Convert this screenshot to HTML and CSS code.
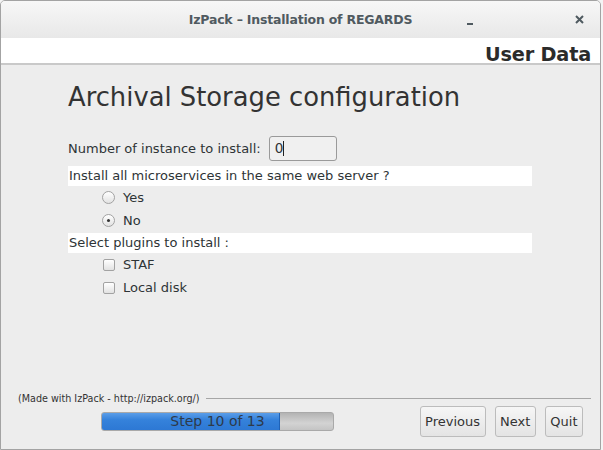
FILE: index.html
```html
<!DOCTYPE html>
<html>
<head>
<meta charset="utf-8">
<link rel="stylesheet" href="styles.css">
</head>
<body>
<div class="window">
  <div class="titlebar">
    <span class="title">IzPack – Installation of REGARDS</span>
    <span class="tb-min"></span>
    <svg class="tb-close" width="9" height="9" viewBox="0 0 9 9"><path d="M1 1L8 8M8 1L1 8" stroke="#4f5a60" stroke-width="2"/></svg>
  </div>
  <div class="header"><span class="header-title">User Data</span></div>
  <div class="panel">
    <div class="form">
      <h1 class="heading">Archival Storage configuration</h1>
      <div class="field-row">
        <span class="label">Number of instance to install:</span>
        <span class="input">0<span class="caret"></span></span>
      </div>
      <div class="band band-first">Install all microservices in the same web server ?</div>
      <div class="opt"><span class="radio"></span><span>Yes</span></div>
      <div class="opt"><span class="radio checked"></span><span>No</span></div>
      <div class="band">Select plugins to install :</div>
      <div class="opt"><span class="check"></span><span>STAF</span></div>
      <div class="opt"><span class="check"></span><span>Local disk</span></div>
    </div>
    <div class="footer">
      <div class="madewith"><span class="madewith-text">(Made with IzPack - http://izpack.org/)</span><span class="rule"></span></div>
      <div class="nav">
        <div class="progress"><div class="progress-fill" style="width:77%"></div><span class="progress-text">Step 10 of 13</span></div>
        <div class="buttons">
          <button class="btn">Previous</button>
          <button class="btn">Next</button>
          <button class="btn">Quit</button>
        </div>
      </div>
    </div>
  </div>
</div>
</body>
</html>
```
FILE: styles.css
```css
html, body { margin: 0; padding: 0; }
body {
  width: 603px; height: 450px; overflow: hidden;
  background: #f4f4f4;
  font-family: "DejaVu Sans", sans-serif;
  color: #2e3436;
}
.window {
  box-sizing: border-box;
  width: 601px; height: 450px;
  border: 1px solid #a3a3a3;
  border-radius: 5px 5px 0 0;
  display: flex; flex-direction: column;
  background: #ededed;
  overflow: hidden;
}
.titlebar {
  position: relative;
  height: 37px; flex: none;
  background: linear-gradient(#f7f7f7, #e8e8e8);
  display: flex; align-items: center; justify-content: center;
}
.title {
  font-family: "DejaVu Sans", sans-serif;
  font-weight: bold; font-size: 12.5px; color: #505a60;
  letter-spacing: -0.2px;
}
.tb-min {
  position: absolute; left: 466px; top: 22px;
  width: 6px; height: 2px; background: #4f5a60;
}
.tb-close { position: absolute; left: 574px; top: 14px; }
.header {
  height: 25px; flex: none;
  background: #fff;
  border-bottom: 2px solid #c9c9c9;
  display: flex; justify-content: flex-end; align-items: flex-end;
  padding-right: 9px;
}
.header-title {
  font-weight: bold; font-size: 19.3px; color: #2b2b2b;
  line-height: 23px; letter-spacing: -0.2px;
  margin-bottom: -3px;
}
.panel { flex: 1; display: flex; flex-direction: column; }
.form { padding-left: 67px; width: 464px; flex: 1; }
.heading {
  margin: 17px 0 0 0;
  font-size: 25.8px; font-weight: normal; line-height: 30px;
  color: #333; letter-spacing: 0;
}
.field-row {
  margin-top: 24px;
  display: flex; align-items: center; height: 25px;
  font-size: 13px;
}
.label { margin-right: 8px; }
.input {
  box-sizing: border-box;
  width: 68px; height: 25px;
  border: 1px solid #9a9a9a; border-radius: 3px;
  background: #f0f0f0;
  padding-left: 5px; font-size: 13.5px; line-height: 23px;
  display: flex; align-items: center;
}
.caret { width: 1px; height: 15px; background: #222; margin-left: 0; }
.band {
  margin-top: 1px;
  background: #fff; height: 20px; line-height: 20px;
  font-size: 13px; padding-left: 1px;
}
.band-first { margin-top: 5px; }
.opt {
  height: 23px; display: flex; align-items: center;
  padding-left: 34px; font-size: 13px;
}
.opt span:last-child { margin-left: 8px; }
.radio {
  box-sizing: border-box;
  width: 13px; height: 13px; border-radius: 50%;
  border: 1px solid #a2a2a2;
  background: linear-gradient(#ffffff, #e2e2e2);
  display: flex; align-items: center; justify-content: center;
}
.radio.checked::after {
  content: ""; width: 3px; height: 3px; border-radius: 50%; background: #333;
}
.check {
  box-sizing: border-box;
  width: 12px; height: 12px; border-radius: 2px;
  border: 1px solid #a2a2a2;
  background: linear-gradient(#ffffff, #e2e2e2);
  margin-left: 1px;
}
.footer { height: 58px; flex: none; padding-left: 17px; padding-right: 17px; }
.madewith { display: flex; align-items: center; height: 14px; }
.madewith-text { font-size: 9.6px; color: #333; }
.rule { flex: 1; height: 1px; background: #a6a6a6; margin-left: 6px; margin-right: -8px; }
.nav { display: flex; align-items: center; margin-top: 1px; }
.progress {
  position: relative;
  box-sizing: border-box;
  margin-left: 83px;
  width: 233px; height: 19px;
  border: 1px solid #a9a9a9; border-radius: 3px;
  background: linear-gradient(#b3b3b3, #d3d3d3 60%, #c4c4c4);
  overflow: hidden;
}
.progress-fill {
  height: 100%;
  box-sizing: border-box;
  background: linear-gradient(#5a9de8, #3582db 40%, #2d78d4);
  border-right: 1px solid #1e62b8;
}
.progress-text {
  position: absolute; left: 0; right: 0; top: 0; bottom: 0;
  text-align: center; font-size: 14px; line-height: 17px; color: #2e3a4a;
}
.buttons { margin-left: auto; display: flex; gap: 9px; }
.btn {
  box-sizing: border-box;
  height: 31px; padding: 0 4.5px;
  border: 1px solid #bcbcbc; border-radius: 3px;
  background: linear-gradient(#f6f6f6, #e4e4e4);
  font-family: "DejaVu Sans", sans-serif; font-size: 13px; color: #333;
}
```
